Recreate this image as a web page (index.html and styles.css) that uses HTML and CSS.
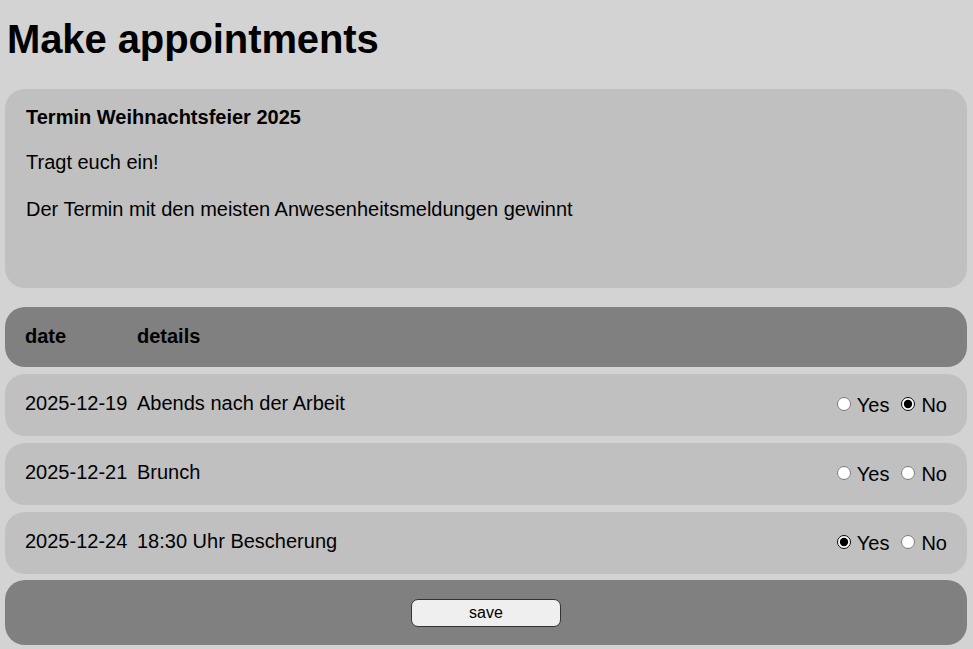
FILE: index.html
```html
<!DOCTYPE html>
<html>
<head>
<meta charset="utf-8">
<link rel="stylesheet" href="styles.css">
</head>
<body>
<h1 class="title">Make appointments</h1>
<div class="card">
  <p class="card-title">Termin Weihnachtsfeier 2025</p>
  <p class="card-text">Tragt euch ein!</p>
  <p class="card-text">Der Termin mit den meisten Anwesenheitsmeldungen gewinnt</p>
</div>
<div class="row head">
  <span class="date">date</span>
  <span class="details">details</span>
</div>
<div class="row">
  <span class="date">2025-12-19</span>
  <span class="details">Abends nach der Arbeit</span>
  <span class="choice"><label><input type="radio" name="a">Yes</label><label><input type="radio" name="a" checked>No</label></span>
</div>
<div class="row">
  <span class="date">2025-12-21</span>
  <span class="details">Brunch</span>
  <span class="choice"><label><input type="radio" name="b">Yes</label><label><input type="radio" name="b">No</label></span>
</div>
<div class="row">
  <span class="date">2025-12-24</span>
  <span class="details">18:30 Uhr Bescherung</span>
  <span class="choice"><label><input type="radio" name="c" checked>Yes</label><label><input type="radio" name="c">No</label></span>
</div>
<div class="footer">
  <button class="save">save</button>
</div>
</body>
</html>
```
FILE: styles.css
```css
html { background: #d3d3d3; }
body {
  margin: 0;
  padding: 0 6px 0 5px;
  font-family: "Liberation Sans", Arial, sans-serif;
  color: #000;
}
.title {
  font-size: 40px;
  margin: 0;
  padding: 16px 0 0 2px;
  height: 89px;
  box-sizing: border-box;
  line-height: 46px;
  letter-spacing: -0.1px;
}
.card {
  background: #c0c0c0;
  border-radius: 20px;
  height: 199px;
  box-sizing: border-box;
  padding: 17px 21px;
}
.card p { margin: 0; font-size: 20px; line-height: 23px; }
.card-title { font-weight: bold; margin-bottom: 22px !important; }
.card-text { margin-bottom: 24px !important; }
.row {
  display: flex;
  align-items: center;
  background: #c0c0c0;
  border-radius: 20px;
  height: 62px;
  box-sizing: border-box;
  margin-top: 7px;
  padding: 0 20px 3px;
  font-size: 20px;
}
.row.head {
  background: #808080;
  font-weight: bold;
  height: 60px;
  margin-top: 19px;
  padding-bottom: 2px;
}
.date { width: 112px; }
.details { flex: 1; }
.choice { display: flex; padding-top: 3px; }
.choice label { display: flex; align-items: center; margin-left: 12px; }
.choice label:first-child { margin-left: 0; }
.choice input {
  margin: 0 6px 2px 0;
  width: 14px; height: 14px;
  accent-color: #000;
}
.footer {
  background: #808080;
  border-radius: 20px;
  height: 65px;
  margin-top: 6px;
  display: flex;
  justify-content: center;
  align-items: center;
}
.save {
  width: 150px;
  height: 28px;
  border: 1px solid #333;
  border-radius: 7px;
  background: #efefef;
  font-family: "Liberation Sans", Arial, sans-serif;
  font-size: 16px;
  color: #000;
}
```
